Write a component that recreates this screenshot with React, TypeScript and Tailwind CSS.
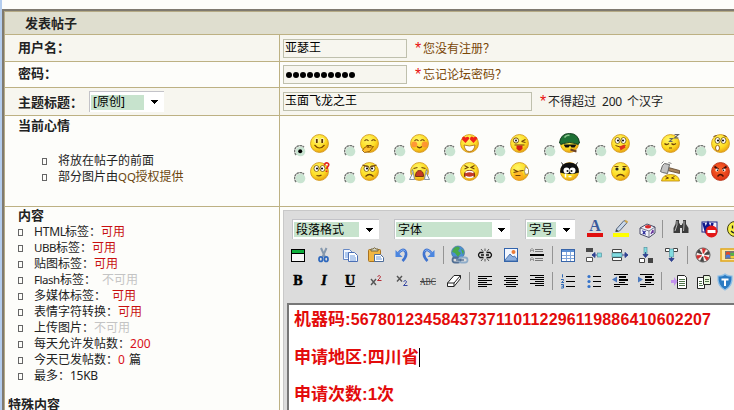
import React from 'react';

const ui = 'font-["Noto_Sans","Noto_Sans_CJK_SC",sans-serif]';
const cjk = 'font-["Noto_Sans_CJK_SC",sans-serif]';

/* ---------- toolbar icons, drawn on a 20x20 grid ---------- */

function Svg({ children, dx = 0 }: { children: React.ReactNode; dx?: number }) {
  return (
    <svg width="20" height="20" viewBox={`${-dx} 0 20 20`} className="shrink-0 overflow-visible" fill="none">
      {children}
    </svg>
  );
}

function Lines({ rows, color = '#000' }: { rows: number[][]; color?: string }) {
  return (
    <g fill={color} shapeRendering="crispEdges">
      {rows.map(([x, y, w, h = 1], i) => (
        <rect key={i} x={x} y={y} width={w} height={h} />
      ))}
    </g>
  );
}

const FontColor = () => (
  <Svg>
    <text x="10" y="12" textAnchor="middle" fontFamily="Liberation Serif, serif" fontWeight="bold" fontSize="16" fill="#3a5a9c">A</text>
    <rect x="2" y="14" width="16" height="4" fill="#e00f0f" />
  </Svg>
);
const Highlight = () => (
  <Svg>
    <rect x="2" y="14" width="16" height="4" fill="#ffff00" />
    <path d="M5.500 10L13 1.500l3 2.200L8.500 12l-3.700.6z" fill="#c9d7e8" stroke="#56657c" />
    <path d="M14 1.500l2.600 2" stroke="#d2a84c" strokeWidth="2" />
    <path d="M4.500 12.500l1.200-2 1.800 1.800z" fill="#333" />
  </Svg>
);
const Dice = () => (
  <Svg dx={1}>
    <path d="M2 9l7-4 8 3v6l-6 4.500L2 15z" fill="#eef0f8" stroke="#4b4b66" />
    <path d="M2 9l9 3 6-4M11 12v6" stroke="#4b4b66" strokeWidth=".7" />
    <ellipse cx="10" cy="7.700" rx="3" ry="1.700" fill="#d92a2a" />
    <path d="M4.500 11.500l3 4M7.500 12l-2.600 3" stroke="#27279a" strokeWidth="1.200" />
    <path d="M13 15l2-4v3" stroke="#6a369b" strokeWidth="1.400" />
  </Svg>
);
const Binoculars = () => (
  <Svg dx={3}>
    <g fill="#3c3c3c">
      <path d="M5 1h3v3l1 1v9H2.500V9l2-4zM12 1h3v4l2.500 4v5H11V5l1-1z" />
      <rect x="8" y="6" width="4" height="3" />
    </g>
    <path d="M6 2v4l-2 6M13 2v4l-.500 6" stroke="#b3b3b3" />
  </Svg>
);
const WordClean = () => (
  <Svg dx={5}>
    <rect x="3" y="3" width="15" height="10" fill="#f4f4ff" stroke="#1d2587" />
    <path d="M4.500 4l2 7L9 5l2.500 6 2-7" stroke="#10188c" strokeWidth="2.600" />
    <circle cx="12.500" cy="12.500" r="6" fill="#e31717" />
    <rect x="8.500" y="11" width="8" height="3" fill="#fff" />
  </Svg>
);
const Smile = () => (
  <Svg dx={5}>
    <circle cx="10" cy="10" r="7.500" fill="#f5ef45" stroke="#3e3c10" />
    <path d="M7.500 6.500v3M12.500 6.500v3M6 12q4 4 8 0" stroke="#222" strokeWidth="1.300" />
  </Svg>
);
const WindowIcon = () => (
  <Svg>
    <rect x="3.500" y="4.500" width="13" height="12" fill="#f8f8f8" stroke="#000" />
    <rect x="4" y="5" width="12" height="3" fill="#0fae3c" />
    <path d="M3 8.500h14" stroke="#000" />
  </Svg>
);
const Scissors = () => (
  <Svg>
    <path d="M7 3l4 9M12.500 3l-4 9" stroke="#8598ad" strokeWidth="2" />
    <ellipse cx="6.800" cy="14.200" rx="1.800" ry="2.300" stroke="#2c67bd" strokeWidth="1.700" />
    <ellipse cx="12.200" cy="14.200" rx="1.800" ry="2.300" stroke="#2c67bd" strokeWidth="1.700" />
  </Svg>
);
const Copy = () => (
  <Svg>
    <path d="M3.500 4.500h6l3 3v7h-9z" fill="#f5f9ff" stroke="#6688c4" />
    <path d="M5 8h5M5 10h3M5 12h3" stroke="#6c9ade" />
    <path d="M8.500 7.500h6l3 3v6h-9z" fill="#fff" stroke="#4b6fb5" />
    <path d="M10 11h5M10 13h6M10 15h6" stroke="#6c9ade" />
  </Svg>
);
const Paste = () => (
  <Svg>
    <rect x="2.500" y="4.500" width="12" height="12" rx="1" fill="#f0b644" stroke="#a87220" />
    <path d="M5 6V4h2q1.500-2.500 3 0h2v2z" fill="#d7d7c4" stroke="#75663c" />
    <path d="M8.500 9.500h6l3 3v4h-9z" fill="#fff" stroke="#4e6d99" />
    <path d="M10 12h5M10 14h6" stroke="#6c9ade" />
  </Svg>
);
const undoShape = (
  <g>
    <path d="M6 8.500Q11 2.500 13.500 6.500q2 4.500-3 9.500" stroke="#3f73cf" strokeWidth="2.600" />
    <path d="M6 8.500Q11 2.500 13.500 6.500" stroke="#86b3f5" />
    <path d="M3.500 5v7h7z" fill="#4b86e0" />
  </g>
);
const Undo = () => <Svg>{undoShape}</Svg>;
const Redo = () => (
  <Svg>
    <g transform="matrix(-1 0 0 1 20 0)">{undoShape}</g>
  </Svg>
);
const GlobeLink = () => (
  <Svg>
    <circle cx="9" cy="7.500" r="6.500" fill="#4a8ed3" stroke="#3a6c96" strokeWidth=".6" />
    <path d="M5 3q4-3 6 0l-2 3 3 2-3 4-3-4-3-1zM12 4l3 2-1 4z" fill="#48a94a" />
    <rect x="3.500" y="12.500" width="8" height="5" rx="2.500" stroke="#526f94" strokeWidth="1.800" />
    <rect x="10" y="12.500" width="8.500" height="5" rx="2.500" stroke="#8eacc9" strokeWidth="1.800" />
    <path d="M7 15h8" stroke="#526f94" strokeWidth="1.400" />
  </Svg>
);
const Unlink = () => (
  <Svg>
    <path d="M8.500 7.500H5q-3 2.500 0 5h3.500M11.500 7.500H15q3 2.500 0 5h-3.500M6 10h3M11 10h3" stroke="#111" strokeWidth="1.300" />
    <path d="M6 4l2 2.500M10 3.500V6M14 4l-2 2.500M6 16l2-2.500M10 16.500V14M14 16l-2-2.500" stroke="#333" strokeWidth=".8" />
  </Svg>
);
const Picture = () => (
  <Svg>
    <rect x="3.500" y="3.500" width="13" height="13" fill="#f3f7ff" stroke="#3264ad" />
    <path d="M4 15l5-6 3 3 1.500-1 2.500 3v2H4z" fill="#8baedf" stroke="#3562a0" strokeWidth=".8" />
    <circle cx="12.500" cy="7" r="2" fill="#eb7c37" />
  </Svg>
);
const Rule = () => (
  <Svg>
    <rect x="3" y="9" width="14" height="2" fill="#000" />
    <Lines color="#777" rows={[[8, 4, 8], [8, 6, 8], [8, 13, 8], [8, 15, 8]]} />
    <path d="M3.500 7V4.500L5 3.500l1.500 1V7M3.500 5.500h3M3.500 16v-2.500l1.500-1 1.500 1V16M3.500 14.500h3" stroke="#888" strokeWidth=".8" />
  </Svg>
);
const TableIcon = () => (
  <Svg>
    <rect x="3.500" y="4.500" width="13" height="12" fill="#fff" stroke="#3865a9" />
    <rect x="4" y="5" width="12" height="2" fill="#5d90d5" />
    <path d="M4 10.500h12M4 13.500h12M8.500 7v9M12.500 7v9" stroke="#83a7db" />
  </Svg>
);
const InsCol = () => (
  <Svg>
    <rect x="2" y="3" width="7" height="4" fill="#4a4a4a" />
    <path d="M2.500 12.500h6v4h-6z" fill="#fff" stroke="#555" />
    <rect x="13.500" y="8" width="4" height="4" fill="#83dce0" stroke="#468b98" strokeWidth=".6" />
    <path d="M8 10h5M11 7.500L8 10l3 2.500z" fill="#314391" stroke="#314391" strokeWidth=".9" />
  </Svg>
);
const InsRow = () => (
  <Svg>
    <path d="M2.500 4.500h9v3h-9zM2.500 12.500h9v3h-9z" fill="#fff" stroke="#444" />
    <rect x="2" y="8" width="10" height="4" fill="#83dce0" stroke="#468b98" strokeWidth=".6" />
    <path d="M12 10h5M15 7.500l3 2.500-3 2.500z" fill="#314391" stroke="#314391" strokeWidth=".9" />
  </Svg>
);
const DelCol = () => (
  <Svg>
    <rect x="8" y="2.500" width="3" height="6" fill="#83dce0" stroke="#468b98" strokeWidth=".6" />
    <path d="M3.500 13.500h5v4h-5z" fill="#fff" stroke="#444" />
    <rect x="12" y="13" width="5" height="5" fill="#444" />
    <path d="M9.500 7v4M7 9.500l2.500 3 2.500-3z" fill="#314391" stroke="#314391" strokeWidth=".9" />
  </Svg>
);
const DelRow = () => (
  <Svg>
    <path d="M3.500 3.500h4v3h-4zM11.500 3.500h4v3h-4z" fill="#fff" stroke="#444" />
    <rect x="7.500" y="4" width="4" height="8" fill="#83dce0" stroke="#468b98" strokeWidth=".6" />
    <path d="M9.500 12v3M7 13.500l2.500 3 2.500-3z" fill="#314391" stroke="#314391" strokeWidth=".9" />
  </Svg>
);
const Wheel = () => (
  <Svg>
    <circle cx="10" cy="10" r="7" fill="#f5e8e5" stroke="#555" />
    {[0, 60, 120, 180, 240, 300].map((a) => (
      <path key={a} d="M10 10L9 3.300q3-.2 4 1z" fill={a % 120 ? '#444' : '#d32f2f'} transform={`rotate(${a} 10 10)`} />
    ))}
    <circle cx="10" cy="10" r="1.500" fill="#fff" />
  </Svg>
);
const MediaIcon = () => (
  <Svg dx={1}>
    <rect x="1" y="4" width="17" height="12" fill="#fbe7a3" stroke="#e3aa24" strokeWidth="1.600" />
    <rect x="5" y="6" width="11" height="8" fill="#777" />
    <path d="M6 7.500q2-1.500 4 0V10q-2-1.500-4 0z" fill="#e54a27" />
    <path d="M10.500 7.500q2 1 4 0V10q-2 1-4 0z" fill="#52b743" />
    <path d="M6 10.500q2-1.500 4 0V13q-2-1.500-4 0z" fill="#4a7be0" />
    <path d="M10.500 10.500q2 1 4 0V13q-2 1-4 0z" fill="#f4cf35" />
  </Svg>
);
const Letter = ({ children, style }: { children: string; style: string }) => (
  <span className={`font-["Liberation_Serif",serif] text-[14px] leading-[18px] font-bold text-black [-webkit-text-stroke:0.5px_black] ${style}`}>
    {children}
  </span>
);
const Script = ({ sup }: { sup?: boolean }) => (
  <Svg>
    <path d={sup ? 'M5 8l5 6M10 8l-5 6' : 'M5 5l5 5.500M10 5l-5 5.500'} stroke="#555" strokeWidth="1.400" />
    <path d={sup ? 'M11.500 5.500q2-2 3 0 0 1.500-3 4h4' : 'M11.500 10.500q2-2 3 0 0 1.500-3 4h4'} stroke={sup ? '#b72b35' : '#3445a0'} />
  </Svg>
);
const Abc = () => (
  <Svg>
    <text x="10" y="13.500" textAnchor="middle" fontFamily="Liberation Serif, serif" fontSize="9.500" textLength="16" lengthAdjust="spacingAndGlyphs" fill="#333">ABC</text>
    <path d="M2 10.500h16" stroke="#444" />
  </Svg>
);
const Eraser = () => (
  <Svg>
    <path d="M3.500 12L10 4.500h6.500v3L10 15.500H3.500z" fill="#fff" stroke="#222" />
    <path d="M3.500 12H10l6.500-7.500M10 12v3.500" stroke="#222" />
  </Svg>
);
const AlignLeft = () => (
  <Svg><Lines rows={[[3, 5, 14], [3, 7, 9], [3, 9, 14], [3, 11, 9], [3, 13, 14], [3, 15, 9]]} /></Svg>
);
const AlignCenter = () => (
  <Svg><Lines rows={[[3, 5, 14], [5, 7, 10], [3, 9, 14], [5, 11, 10], [3, 13, 14], [5, 15, 10]]} /></Svg>
);
const AlignRight = () => (
  <Svg><Lines rows={[[3, 4, 14], [8, 6, 9], [3, 8, 14], [8, 10, 9], [3, 12, 14], [8, 14, 9]]} /></Svg>
);
const Ordered = () => (
  <Svg>
    <Lines rows={[[8, 5, 9], [8, 10, 9], [8, 15, 9]]} />
    <path d="M4 3.500h.5v3M3 8.500h2.500v1L3.500 11.500H6M3 13.500h2.500v3.500H3M3.500 15.200h2" stroke="#2e68b5" />
  </Svg>
);
const Bullets = () => (
  <Svg>
    <Lines rows={[[9, 5, 8], [9, 10, 8], [9, 15, 8]]} />
    <g fill="#3472ca"><circle cx="5" cy="5.500" r="1.600" /><circle cx="5" cy="10.500" r="1.600" /><circle cx="5" cy="15.500" r="1.600" /></g>
  </Svg>
);
const Indent = ({ out }: { out?: boolean }) => (
  <Svg>
    <Lines rows={[[4, 3, 14], [9, 5, 7, 2], [9, 8, 9, 2], [9, 11, 6], [4, 13, 14], [4, 15, 6]]} />
    <path d={out ? 'M7 5.500v6L2 8.500z' : 'M2 5.500v6l5-3z'} fill="#4a78bd" />
  </Svg>
);
const PagePaste = () => (
  <Svg dx={3}>
    <path d="M7.500 4.500h7l2 2v11h-9z" fill="#fff" stroke="#222" />
    <path d="M9 8.500h6M9 10.500h6M9 12.500h6M9 14.500h6" stroke="#4f744a" />
    <path d="M1 9h3V6l3.500 4.500L4 15v-3H1z" fill="#c493ef" />
  </Svg>
);
const Pages = () => (
  <Svg dx={1}>
    <path d="M3.500 6.500h7v11h-7z" fill="#fff" stroke="#222" />
    <path d="M9.500 4.500h6l1 2v7h-7z" fill="#e9f7dd" stroke="#222" />
    <path d="M5 10.500h3M5 12.500h3M5 14.500h4M11 8.500h4M11 10.500h4" stroke="#53744e" />
  </Svg>
);
const Shield = () => (
  <Svg dx={-4}>
    <path d="M3 5Q8 5 10 3q2 2 7 2 1 10-7 14Q2 15 3 5z" fill="#2a7bc3" stroke="#8fbfe6" strokeWidth="1.200" />
    <path d="M6.500 8.500h7M10 8.500V15" stroke="#fff" strokeWidth="2" />
  </Svg>
);

const Cell = ({ children }: { children: React.ReactNode }) => (
  <div className="flex h-[22px] w-[26px] shrink-0 items-center justify-center">{children}</div>
);
const Sep = () => (
  <div className="flex w-[5px] shrink-0 justify-center self-center"><div className="h-[18px] w-px bg-[#949494]" /></div>
);

function Tools({ groups }: { groups: React.ReactNode[][] }) {
  return (
    <>
      {groups.map((g, i) => (
        <React.Fragment key={i}>
          {i > 0 && <Sep />}
          {g.map((icon, j) => <Cell key={j}>{icon}</Cell>)}
        </React.Fragment>
      ))}
    </>
  );
}

function Select({ label, box, fill }: { label: string; box: string; fill: string }) {
  return (
    <div className={`flex shrink-0 items-center border-t border-l border-[#c3c3c8] bg-white p-[2px] pl-px ${box}`}>
      <div className={`flex h-[15px] items-center whitespace-nowrap bg-[#c7e3cd] pl-[2px] text-black ${fill}`}>{label}</div>
      <div className="flex flex-1 justify-center pl-[3px]">
        <svg width="7" height="4" viewBox="0 0 7 4" shapeRendering="crispEdges"><path d="M0 0h7L3.500 4z" fill="#000" /></svg>
      </div>
    </div>
  );
}

/* ---------- mood faces ---------- */

const eyes = <path d="M7.300 5.500v4M12.700 5.500v4" stroke="#5d3600" strokeWidth="1.800" />;
const bigEyes = (
  <g>
    <ellipse cx="7" cy="7" rx="2.500" ry="3" fill="#fff" stroke="#6b4a00" strokeWidth=".8" />
    <ellipse cx="13" cy="7" rx="2.500" ry="3" fill="#fff" stroke="#6b4a00" strokeWidth=".8" />
    <circle cx="7.500" cy="7" r="1.100" fill="#111" /><circle cx="12.500" cy="7" r="1.100" fill="#111" />
  </g>
);

const features: Record<string, React.ReactNode> = {
  smile: <g><ellipse cx="7" cy="7" rx="2" ry="2.800" fill="#fff2b0" /><ellipse cx="13" cy="7" rx="2" ry="2.800" fill="#fff2b0" />{eyes}<path d="M5 11.500q5 6 10 0" stroke="#7d4700" strokeWidth="1.200" /></g>,
  giggle: <g><path d="M5 7.500q2-2.500 4 0M12 7.500q2-2.500 4 0M7 12h5" stroke="#70420a" strokeWidth="1.200" /><path d="M3 17l2-3 5-2-2 2 6-1-4 5-5 1z" fill="#ffbf2f" stroke="#8c5400" strokeWidth=".9" /></g>,
  shy: <g><circle cx="4.800" cy="11" r="3" fill="#ff8534" opacity=".8" /><circle cx="15.200" cy="11" r="3" fill="#ff8534" opacity=".8" /><path d="M5 7.500q2-2.500 4 0M11 7.500q2-2.500 4 0M7.500 13q2.500 2.500 5 0" stroke="#70420a" strokeWidth="1.200" /></g>,
  love: <g><path d="M6 9.500L2.500 6q0-3 2-3L6 4q3-2 4 1zM14 9.500L10.500 6q0-3 2-3L14 4q3-2 4 1z" fill="#ed2319" /><path d="M4.500 11.500q5.500 2 11 0-1 6.500-5.500 6.500t-5.500-6.500z" fill="#fff" stroke="#a86b14" strokeWidth=".8" /></g>,
  tongue: <g><circle cx="6.500" cy="7" r="2.600" fill="#fff" stroke="#76510a" /><circle cx="6.500" cy="7" r="1" fill="#111" /><path d="M12 8l4-2M12 8l4 1M5 11.500h10" stroke="#70420a" strokeWidth="1.200" /><path d="M7 12h6v3q-3 4.500-6 0z" fill="#d42018" /></g>,
  soldier: <g><path d="M0 9.500Q1 0 10 0t10 9.500Q19 12 16 10q-6-2-12 0-3 2-4-.5z" fill="#1e7135" stroke="#153f20" /><path d="M5 4q2-3 5-2" stroke="#8ac68e" strokeWidth="1.500" /><path d="M4 11h13l-2 3h-3l-1.500-2L9 14H6z" fill="#111" /><path d="M11 16l6 2" stroke="#6b4126" strokeWidth="2" /></g>,
  yum: <g>{bigEyes}<path d="M5 12q4 3 10 0" stroke="#70420a" /><path d="M9 13l5-2 1 3-5 3z" fill="#df3320" /></g>,
  sleep: <g><path d="M4 10q2 2 4.500 0M11 10q2 2 4.500 0M8.500 14.500h3" stroke="#70420a" strokeWidth="1.200" /><path d="M14 1h4l-4 3.500h4M9 5h3l-3 3h3" stroke="#666" strokeWidth="1.100" /></g>,
  shock: <g>{bigEyes}<path d="M3 3l3-1M13 2l3 1" stroke="#70420a" /><ellipse cx="7" cy="14.500" rx="2" ry="2.700" fill="#fff" stroke="#a86b14" /></g>,
  doubt: <g>{bigEyes}<path d="M7 14q3 1 5-.500" stroke="#70420a" strokeWidth="1.200" /><path d="M15 4q0-3 3-2.500 2.500 1 0 4l-1 2M17 9v1.500" stroke="#e3221f" strokeWidth="1.700" /></g>,
  annoyed: <g>{bigEyes}<path d="M3 3.500l6 2M17 3.500l-6 2M6 15q4-4 8 0" stroke="#70420a" strokeWidth="1.200" /></g>,
  cry: <g><path d="M4 7l4-1M12 6l4 1" stroke="#70420a" strokeWidth="1.200" /><path d="M6 15q0-6 4-6t4 6z" fill="#c63925" stroke="#7a3410" /><path d="M3 8q-1.500 2 0 4l-3 6h5l-1-6zM17 8q1.500 2 0 4l3 6h-5l1-6z" fill="#f7faff" stroke="#687b8d" strokeWidth=".8" /></g>,
  scream: <g><path d="M5 4l3.500 2L5 7.500M15 4l-3.500 2L15 7.500" stroke="#70420a" strokeWidth="1.100" /><path d="M5 15q-1-6 5-6t5 6q-5 2-10 0z" fill="#c63925" stroke="#7a3410" /><path d="M6 11q4-2 8 0M6 15q4 2 8 0" stroke="#fff" strokeWidth="1.400" /></g>,
  sweat: <g><circle cx="9" cy="14" r="5" fill="#ff9c20" opacity=".6" /><path d="M4 8l4 2-4 1M10 9.500l4-.500M6 14h5" stroke="#70420a" strokeWidth="1.200" /><path d="M16 5l3 3v4l-3 1-1-3z" fill="#fff" stroke="#8e8265" strokeWidth=".8" /></g>,
  dark: <g><path d="M.5 11Q.5 1 10 1t9.500 10Q10 14 .5 11z" fill="#101010" /><path d="M2 1l2 3M18 1l-2 3" stroke="#222" /><circle cx="7" cy="9" r="3" fill="#fff" /><circle cx="13" cy="9" r="3" fill="#fff" /><circle cx="8" cy="9.500" r="1" fill="#111" /><circle cx="12" cy="9.500" r="1" fill="#111" /><path d="M6 12v4M9 15h3" stroke="#fff" strokeWidth="1.500" /></g>,
  sad: <g><path d="M4 5h4M12 5h4" stroke="#70420a" /><circle cx="6.500" cy="7.500" r="1.600" fill="#222" /><circle cx="13.500" cy="7.500" r="1.600" fill="#222" /><path d="M6 15q4-4 8 0" stroke="#70420a" strokeWidth="1.300" /></g>,
  angry: <g><path d="M4 5l4 3M16 5l-4 3" stroke="#3f0d05" strokeWidth="1.800" /><circle cx="6.500" cy="8.500" r="1.600" fill="#fff" /><circle cx="13.500" cy="8.500" r="1.600" fill="#fff" /><circle cx="7" cy="8.800" r=".8" fill="#111" /><circle cx="13" cy="8.800" r=".8" fill="#111" /><path d="M7 15q3-4 6 0" stroke="#4b1207" strokeWidth="1.400" /></g>,
};

function Face({ kind }: { kind: string }) {
  return (
    <svg width="20" height="20" viewBox="0.500 -0.500 20 20" fill="none" className="shrink-0 overflow-visible">
      {kind === 'hammer' ? (
        <g>
          <path d="M1 19.500Q2 13 10 13t9 6.500z" fill="#fddc22" stroke="#b88008" strokeWidth=".8" />
          <path d="M5 15l3 1.500-3 1M14 15l-3 1.500 3 1" stroke="#70420a" />
          <path d="M8 6l11 3v3L7 9z" fill="#a6845e" stroke="#5d4329" strokeWidth=".8" />
          <path d="M4 2l5 1-2 9-5-1-2-1 2-6z" fill="#c4c4c4" stroke="#686868" />
          <path d="M1 2l2-2M8 1l3 1" stroke="#888" />
        </g>
      ) : (
        <g>
          <circle cx="10" cy="10" r="9" fill={kind === 'angry' ? 'url(#faceRed)' : 'url(#faceGold)'} stroke={kind === 'angry' ? '#b32d10' : '#d09415'} strokeWidth=".8" />
          {features[kind]}
        </g>
      )}
    </svg>
  );
}

function Radio({ on }: { on?: boolean }) {
  return (
    <svg width="12" height="12" viewBox="0 0 12 12" className="shrink-0">
      <circle cx="6.500" cy="6.500" r="4.800" fill="#c9e4d1" />
      <path d="M2.200 10A5.200 5.200 0 0 1 10 2.200" fill="none" stroke="#707570" strokeWidth="1.400" strokeDasharray="2.500 .5" />
      {on && <circle cx="6.200" cy="6.200" r="2" fill="#000" />}
    </svg>
  );
}

function FaceRow({ kinds, checked, radioTop }: { kinds: string[]; checked?: boolean; radioTop: string }) {
  return (
    <div className="flex h-[28px]">
      {kinds.map((k, i) => (
        <div key={k} className="flex w-[50.1px] shrink-0 gap-[4px]">
          <div className={radioTop}><Radio on={checked && i === 0} /></div>
          <Face kind={k} />
        </div>
      ))}
    </div>
  );
}

/* ---------- form ---------- */

const Bold = ({ children, pad = '', lead = 'leading-[16px]' }: { children: string; pad?: string; lead?: string }) => (
  <div className={`text-[13px] font-bold whitespace-nowrap text-[#222] ${lead} ${cjk} ${pad}`}>{children}</div>
);

const Item = ({ children }: { children: React.ReactNode }) => (
  <li className="flex h-[16px] items-center gap-[11px] whitespace-nowrap">
    <span className="h-[7px] w-[5px] shrink-0 border border-[#666]" />
    <span className="flex leading-[16px]">{children}</span>
  </li>
);

const Ok = () => <span className="text-[#c81010]">可用</span>;
const No = () => <span className="text-[#c4c4c4]">不可用</span>;
const Star = () => <span className='h-[16px] w-[8px] font-["Liberation_Sans",sans-serif] text-[16px] leading-[18px] text-[#e81010]'>*</span>;

function Row({ height, tone, left, right }: { height: string; tone: string; left: React.ReactNode; right: React.ReactNode }) {
  return (
    <div className={`flex shrink-0 border-b border-[#bdb183] ${height} ${tone}`}>
      <div className="w-[275px] shrink-0 border-r border-[#bdb183]">{left}</div>
      <div className="min-w-0 flex-1">{right}</div>
    </div>
  );
}

const Field = ({ children, width }: { children: React.ReactNode; width: string }) => (
  <div className={`flex h-[19px] shrink-0 items-start border border-[#bfc0ad] bg-[#f7f6ef] pl-[1px] leading-[15px] text-black ${width}`}>{children}</div>
);

export default function App() {
  return (
    <div className={`flex h-[410px] w-[734px] overflow-hidden bg-[#fdfdfa] text-[12px] text-[#222] ${ui}`}>
      <svg width="0" height="0" className="absolute">
        <defs>
          <radialGradient id="faceGold" cx=".4" cy=".3" r=".75"><stop offset="0" stopColor="#fff76a" /><stop offset=".6" stopColor="#fddc22" /><stop offset="1" stopColor="#e69a10" /></radialGradient>
          <radialGradient id="faceRed" cx=".45" cy=".4" r=".7"><stop offset="0" stopColor="#ff6a2a" /><stop offset="1" stopColor="#d92a12" /></radialGradient>
        </defs>
      </svg>
      <div className="w-[2px] shrink-0 bg-[#b4cdee]" />
      <div className="mt-[9px] flex min-w-0 flex-1 flex-col border-t-2 border-l-2 border-[#7f7a70]">
        <div className="flex min-h-0 flex-1 flex-col border-t border-l border-[#b5aa86]">
          <div className="flex h-[23px] shrink-0 items-center border-b border-[#bdb183] bg-[#dfdecf]"><Bold pad="pl-[20px]">发表帖子</Bold></div>
          <Row
            height="h-[27px]"
            tone="bg-[#f7f6ef]"
            left={<Bold pad="pl-[13px] pt-[4px]">用户名：</Bold>}
            right={
              <div className="flex pt-[4px] pl-[3px]">
                <Field width="w-[124px]">亚瑟王</Field>
                <div className="flex pt-[1px] pl-[8px] text-[#7a4707]"><Star />您没有注册？</div>
              </div>
            }
          />
          <Row
            height="h-[26px]"
            tone="bg-[#fdfdfa]"
            left={<Bold pad="pl-[13px] pt-[3px]">密码：</Bold>}
            right={
              <div className="flex pt-[3px] pl-[3px]">
                <Field width="w-[124px]">
                  <span className="flex gap-[1px] pt-[6px] pl-[1px]">
                    {Array.from({ length: 10 }, (_, i) => <span key={i} className="size-[6px] rounded-full bg-black" />)}
                  </span>
                </Field>
                <div className="flex pt-[1px] pl-[8px] text-[#7a4707]"><Star />忘记论坛密码？</div>
              </div>
            }
          />
          <Row
            height="h-[28px]"
            tone="bg-[#f7f6ef]"
            left={
              <div className="flex pt-[3px] pl-[13px]">
                <div className="w-[71px] pt-[3px]"><Bold>主题标题：</Bold></div>
                <Select label="[原创]" box="h-[21px] w-[75px]" fill="w-[53px]" />
              </div>
            }
            right={
              <div className="flex pt-[4px] pl-[3px]">
                <Field width="w-[249px]">玉面飞龙之王</Field>
                <div className="flex whitespace-nowrap pt-[1px] pl-[8px]"><Star /><span className="w-[54px]">不得超过</span><span className="w-[25px] tracking-[-0.2px]">200</span>个汉字</div>
              </div>
            }
          />
          <Row
            height="h-[91px]"
            tone="bg-[#fdfdfa]"
            left={
              <div className="pt-[1px]">
                <Bold pad="pl-[13px]">当前心情</Bold>
                <ul className="pt-[20px] pl-[37px]">
                  <Item>将放在帖子的前面</Item>
                  <Item>部分图片由<span className="w-[17.500px] text-[11.500px] text-[#6b450c]">QQ</span><span className="text-[#6b450c]">授权提供</span></Item>
                </ul>
              </div>
            }
            right={
              <div className="overflow-hidden pt-[17px] pl-[14px]">
                <FaceRow checked radioTop="pt-[12px]" kinds={['smile', 'giggle', 'shy', 'love', 'tongue', 'soldier', 'yum', 'sleep', 'shock']} />
                <FaceRow radioTop="pt-[11px]" kinds={['doubt', 'annoyed', 'cry', 'scream', 'sweat', 'dark', 'sad', 'hammer', 'angry']} />
              </div>
            }
          />
          <div className="flex min-h-0 flex-1">
            <div className="w-[275px] shrink-0 border-r border-[#bdb183]">
              <Bold pad="pl-[13px]">内容</Bold>
              <ul className="pt-px pl-[13px]">
                <Item><span className="w-[31px] tracking-[-0.2px]">HTML</span>标签：<Ok /></Item>
                <Item><span className="w-[22px] text-[11.5px] tracking-[-0.5px]">UBB</span>标签：<Ok /></Item>
                <Item>贴图标签：<Ok /></Item>
                <Item><span className="w-[26px] text-[11.5px] tracking-[-0.5px]">Flash</span><span className="w-[42px]">标签：</span><No /></Item>
                <Item><span className="w-[78px]">多媒体标签：</span><Ok /></Item>
                <Item>表情字符转换：<Ok /></Item>
                <Item>上传图片：<No /></Item>
                <Item>每天允许发帖数：<span className="text-[#d81020]">200</span></Item>
                <Item>今天已发帖数：<span className="w-[11px] text-[#d81020]">0</span>篇</Item>
                <Item>最多：<span className="tracking-[-0.3px]">15KB</span></Item>
              </ul>
              <Bold pad="pl-[3px] pt-[14px]" lead="leading-[12px]">特殊内容</Bold>
            </div>
            <div className="flex min-w-0 flex-1 flex-col pt-[3px] pl-[3px]">
              <div className="flex min-h-0 flex-1 flex-col border-t border-l border-[#c8c8c8] bg-[#dcdcdc]">
                <div className="flex h-[92px] w-full shrink-0 flex-col overflow-hidden pt-[5px]">
                  <div className="flex h-[26px] shrink-0 items-center pl-[8px]">
                    <Select label="段落格式" box="h-[20px] w-[87px]" fill="w-[65px]" />
                    <div className="w-[15px] shrink-0" />
                    <Select label="字体" box="h-[20px] w-[116px]" fill="w-[96px]" />
                    <div className="w-[15px] shrink-0" />
                    <Select label="字号" box="h-[20px] w-[50px]" fill="w-[29px]" />
                    <div className="w-[7px] shrink-0" />
                    <Tools groups={[[<FontColor />, <Highlight />, <Dice />], [<Binoculars />, <WordClean />, <Smile />]]} />
                  </div>
                  <div className="flex h-[26px] shrink-0 items-center pl-px">
                    <Tools
                      groups={[
                        [<WindowIcon />, <Scissors />, <Copy />, <Paste />, <Undo />, <Redo />],
                        [<GlobeLink />, <Unlink />, <Picture />, <Rule />],
                        [<TableIcon />, <InsCol />, <InsRow />, <DelCol />, <DelRow />],
                        [<Wheel />, <MediaIcon />],
                      ]}
                    />
                  </div>
                  <div className="flex h-[26px] shrink-0 items-center pl-px">
                    <Tools
                      groups={[
                        [<Letter style="">B</Letter>, <Letter style="italic">I</Letter>, <Letter style="underline">U</Letter>, <Script sup />, <Script />, <Abc />, <Eraser />],
                        [<AlignLeft />, <AlignCenter />, <AlignRight />],
                        [<Ordered />, <Bullets />, <Indent out />, <Indent />],
                        [<PagePaste />, <Pages />, <Shield />],
                      ]}
                    />
                  </div>
                </div>
                <div className={`ml-[3px] min-h-0 flex-1 border-t-2 border-l-2 border-[#777] bg-white pl-[5px] text-[17px] leading-[37.5px] font-bold whitespace-nowrap text-[#e30b0b] font-["Liberation_Sans","Noto_Sans_CJK_SC",sans-serif]`}>
                  <div className="-mt-[4px] h-[37.5px]">机器码:<span className="text-[16px] tracking-[0.18px]">5678012345843737110112296119886410602207</span></div>
                  <div className="flex h-[37.5px] items-center">申请地区:四川省<span className="h-[19px] w-px bg-black" /></div>
                  <div className="h-[37.5px]">申请次数:1次</div>
                </div>
              </div>
            </div>
          </div>
        </div>
      </div>
    </div>
  );
}
